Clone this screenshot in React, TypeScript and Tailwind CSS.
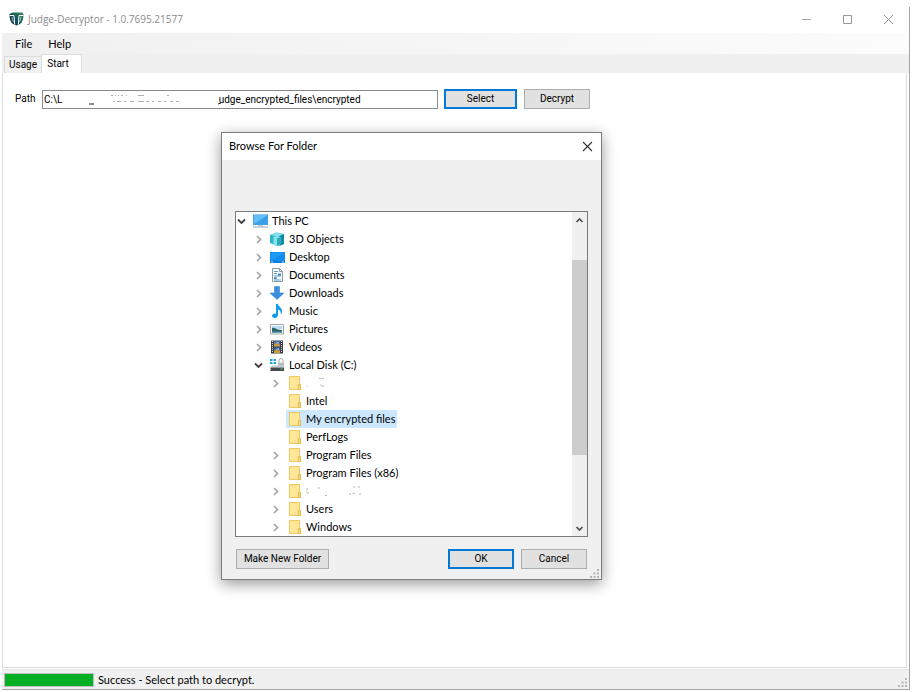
import { useState } from 'react';
import type { ReactNode } from 'react';

type IconName =
  | 'pc'
  | 'objects'
  | 'desktop'
  | 'documents'
  | 'downloads'
  | 'music'
  | 'pictures'
  | 'videos'
  | 'disk'
  | 'folder';

interface TreeNode {
  id: string;
  label: ReactNode;
  depth: 0 | 1 | 2;
  icon: IconName;
  state: 'open' | 'closed' | 'leaf';
}

const INDENT = { 0: 'pl-0', 1: 'pl-[17px]', 2: 'pl-[34px]' };

const NODES: TreeNode[] = [
  { id: 'pc', label: 'This PC', depth: 0, icon: 'pc', state: 'open' },
  { id: 'objects', label: '3D Objects', depth: 1, icon: 'objects', state: 'closed' },
  { id: 'desktop', label: 'Desktop', depth: 1, icon: 'desktop', state: 'closed' },
  { id: 'documents', label: 'Documents', depth: 1, icon: 'documents', state: 'closed' },
  { id: 'downloads', label: 'Downloads', depth: 1, icon: 'downloads', state: 'closed' },
  { id: 'music', label: 'Music', depth: 1, icon: 'music', state: 'closed' },
  { id: 'pictures', label: 'Pictures', depth: 1, icon: 'pictures', state: 'closed' },
  { id: 'videos', label: 'Videos', depth: 1, icon: 'videos', state: 'closed' },
  { id: 'disk', label: 'Local Disk (C:)', depth: 1, icon: 'disk', state: 'open' },
  { id: 'hidden-1', label: <ErasedShort />, depth: 2, icon: 'folder', state: 'closed' },
  { id: 'intel', label: 'Intel', depth: 2, icon: 'folder', state: 'leaf' },
  { id: 'encrypted', label: 'My encrypted files', depth: 2, icon: 'folder', state: 'leaf' },
  { id: 'perflogs', label: 'PerfLogs', depth: 2, icon: 'folder', state: 'leaf' },
  { id: 'program-files', label: 'Program Files', depth: 2, icon: 'folder', state: 'closed' },
  { id: 'program-files-x86', label: 'Program Files (x86)', depth: 2, icon: 'folder', state: 'closed' },
  { id: 'hidden-2', label: <ErasedLong />, depth: 2, icon: 'folder', state: 'closed' },
  { id: 'users', label: 'Users', depth: 2, icon: 'folder', state: 'closed' },
  { id: 'windows', label: 'Windows', depth: 2, icon: 'folder', state: 'closed' },
];

// The user name and download folder are wiped from the path, leaving a gap.
const INITIAL_PATH = 'C:\\L' + '\u00a0'.repeat(63) + 'udge_encrypted_files\\encrypted';

function ErasedShort() {
  return (
    <svg width="24" height="12" viewBox="0 0 24 12" className="block" aria-hidden="true">
      <path d="M0.5 9h1M13 1.5h2M16 1.5h2M15 9h3M14 8h1" stroke="#b9b4c4" />
    </svg>
  );
}

function ErasedLong() {
  return (
    <svg width="58" height="12" viewBox="0 0 58 12" className="block" aria-hidden="true">
      <path d="M1 3v2M1 8h2M13 2v2M19 10.500h2M43 9h2M47 2h2M52 2h2M47 8.500h2M53 9h2" stroke="#b5b5b5" />
      <path d="M0.500 4v4" stroke="#f5e3a0" />
    </svg>
  );
}

function Logo() {
  return (
    <svg width="16" height="16" viewBox="0 0 16 16" aria-hidden="true">
      <defs>
        <linearGradient id="logo" x1="1" y1="0" x2="0" y2="1">
          <stop offset="0" stopColor="#38965a" />
          <stop offset="0.5" stopColor="#14535c" />
          <stop offset="1" stopColor="#15244f" />
        </linearGradient>
      </defs>
      <path
        d="M1.500 3 4.500 1.500h10l1 2c.2 4-1 7.500-3.500 9.500L8.500 14.500 5 13C2.500 11 1.200 7.500 1.500 3z"
        fill="url(#logo)"
      />
      <path d="M1.500 4.500H6l.7 9M15.500 4.500H11l-.7 9" stroke="#fff" strokeWidth="1" fill="none" />
      <path d="M4 6c.2 2 .7 3.500 1.500 5M13 6c-.2 2-.7 3.500-1.500 5" stroke="#dcebec" strokeWidth="0.700" fill="none" />
    </svg>
  );
}

function NodeIcon({ name }: { name: IconName }) {
  return (
    <svg width="16" height="16" viewBox="0 0 16 16" className="shrink-0" aria-hidden="true">
      {name === 'pc' && (
        <>
          <rect x="1" y="1.500" width="15" height="10.500" fill="#2f8edb" />
          <path d="M1.500 2h14v9.500h-14z" fill="#64bdf7" />
          <path d="M1.500 11.500 15.500 2v9.500z" fill="#3a9fe9" />
          <path d="M6 12h5v1.500H6z" fill="#c4ccd3" />
          <path d="M1 14h15" stroke="#96a9b8" />
        </>
      )}
      {name === 'objects' && (
        <>
          <path d="M1 4 7 1.500 15 3v10l-7 2-7-3z" fill="#2eb5cb" />
          <path d="M1 4l7-2.500L15 3 8.500 5.500z" fill="#87e0e8" />
          <path d="M10.500 5 15 3v10l-4.500 2z" fill="#108aa4" />
          <path d="M4.500 6 8 5l3.500 1v7L8 15l-3.500-1.500z" fill="#8be3ea" />
          <path d="M8 7.500 11.500 6v7L8 15z" fill="#27a9bf" />
        </>
      )}
      {name === 'desktop' && (
        <>
          <path d="M1 3h15v11H1z" fill="#0f7fdc" />
          <path d="M1.500 3.500h14v8.500h-14z" fill="#1e9bf8" />
          <path d="M1.500 12 15.500 3.500V12z" fill="#118bee" />
          <path d="M2 13h2M13 13h2" stroke="#bde1ff" />
        </>
      )}
      {name === 'documents' && (
        <>
          <path d="M3.500 1.500h7l3 3v10h-10z" fill="#fafcfd" stroke="#8b989f" />
          <path d="M10.500 1.500v3h3" fill="none" stroke="#8b989f" />
          <path d="M5 4.500h4M5 6.500h3M9 7h3M5 9h7M5 11h3M5 13h7" stroke="#4fa3d4" />
          <path d="M9 7h3v1.500H9zM5 10.500h2.500v1.500H5z" fill="#377fae" />
        </>
      )}
      {name === 'downloads' && (
        <path d="M5.500 1.500h5V8H15l-7 6.500L1 8h4.500z" fill="#3a8ee0" stroke="#2b7acb" strokeWidth="0.500" />
      )}
      {name === 'music' && (
        <path
          d="M7 1h2c.3 2.500 4.500 3.500 4 8-.2 1.200-.7 1.800-1.500 2.500.7-2.500 0-4-2.500-5v5.500c0 1.800-1.500 3-3.200 3S3 14 3 12.800s1.300-2.300 3-2.300c.4 0 .7 0 1 .2z"
          fill="#109bef"
        />
      )}
      {name === 'pictures' && (
        <>
          <path d="M1.500 3.500h13v9.500h-13z" fill="#fff" stroke="#9da5ab" />
          <path d="M3 5h10v3H3z" fill="#b8dcf5" />
          <path d="M3 7c2-1 4 1 6 1.500l4 .5v2.500H3z" fill="#2d675f" />
          <path d="M3 10.500h10v1H3z" fill="#3b8bbf" />
        </>
      )}
      {name === 'videos' && (
        <>
          <path d="M2 1.500h12v13H2z" fill="#3c4044" />
          <path d="M5 2h6v5.500H5z" fill="#476ea8" />
          <path d="M5 8.500h6V14H5z" fill="#3a62a8" />
          <path d="M5 5l3-2 3 3v1.500H5zM5 12l3-2.500 3 2V14H5z" fill="#c49b43" />
          <path d="M8 3h2v2H8zM8 9h2v2H8z" fill="#74a3e0" />
          <path d="M3.500 2v12M12.500 2v12" stroke="#d6d9db" strokeDasharray="1 1" />
        </>
      )}
      {name === 'disk' && (
        <>
          <path d="M1 2h2.500v2H1zM4.500 2H7v2H4.500zM1 5h2.500v2H1zM4.500 5H7v2H4.500z" fill="#13a8e0" />
          <path d="M10 5.500V3.500a2 2 0 0 1 4 0v2" stroke="#a2aaaf" fill="none" />
          <path d="M9 5.500h6v4H9z" fill="#b8bec2" />
          <path d="M3 8.500h11l1 2H1.500z" fill="#c5cbcf" />
          <path d="M1.500 10.500h13.500v3.500H1.500z" fill="#43494d" />
          <path d="M11.500 12h2" stroke="#48df60" />
        </>
      )}
      {name === 'folder' && (
        <>
          <path d="M3.500 1.500h10v9h1v4h-11z" fill="#ffe797" stroke="#edc95f" />
          <path d="M12.500 9.500h2v5h-2z" fill="#ffe08a" stroke="#e3b949" />
        </>
      )}
    </svg>
  );
}

function Expander({ state }: { state: TreeNode['state'] }) {
  if (state === 'leaf') return <span className="w-4 shrink-0" />;
  return (
    <button
      type="button"
      className="flex h-4 w-4 shrink-0 items-center pl-[1px]"
      aria-label={state === 'open' ? 'Collapse' : 'Expand'}
    >
      <svg width="9" height="9" viewBox="0 0 9 9" fill="none" aria-hidden="true">
        {state === 'open' ? (
          <path d="M1 2.500 4.500 6 8 2.500" stroke="#404040" strokeWidth="1.800" />
        ) : (
          <path d="M3 1 6.500 4.500 3 8" stroke="#a6a6a6" strokeWidth="1.700" />
        )}
      </svg>
    </button>
  );
}

function Grip() {
  return (
    <svg width="9" height="9" viewBox="0 0 9 9" fill="#b4b4b4" aria-hidden="true">
      <path d="M7 0h2v2H7zM7 3.500h2v2H7zM7 7h2v2H7zM3.500 3.500h2v2h-2zM3.500 7h2v2h-2zM0 7h2v2H0z" />
    </svg>
  );
}

function PushButton({
  children,
  primary = false,
  className = '',
}: {
  children: ReactNode;
  primary?: boolean;
  className?: string;
}) {
  const border = primary ? 'border-2 border-[#0078d7]' : 'border border-[#adadad]';
  return (
    <button
      type="button"
      className={`flex items-center justify-center bg-[#e1e1e1] text-black ${border} ${className}`}
    >
      {children}
    </button>
  );
}

function FolderTree() {
  const [selected, setSelected] = useState('encrypted');

  return (
    <div className="flex border border-[#7a7a7a] bg-white">
      <ul role="tree" aria-label="Folders" className="min-w-0 flex-1">
        {NODES.map((node) => (
          <li
            key={node.id}
            role="treeitem"
            aria-selected={selected === node.id}
            onClick={() => setSelected(node.id)}
            className={`flex h-[18px] items-center ${INDENT[node.depth]}`}
          >
            <Expander state={node.state} />
            <span
              className={`flex h-[18px] items-center gap-1 whitespace-nowrap pr-[2px] ${
                selected === node.id ? 'bg-[#cce8ff]' : ''
              }`}
            >
              <NodeIcon name={node.icon} />
              {node.label}
            </span>
          </li>
        ))}
      </ul>
      <div className="flex w-[15px] shrink-0 flex-col bg-[#f0f0f0]">
        <button type="button" aria-label="Scroll up" className="flex h-4 items-center justify-center">
          <svg width="9" height="7" viewBox="0 0 9 7" fill="none" aria-hidden="true">
            <path d="M1.500 5 4.500 2l3 3" stroke="#505050" strokeWidth="1.700" />
          </svg>
        </button>
        <div className="h-8" />
        <div className="h-[195px] bg-[#cdcdcd]" />
        <div className="flex-1" />
        <button type="button" aria-label="Scroll down" className="flex h-4 items-center justify-center">
          <svg width="9" height="7" viewBox="0 0 9 7" fill="none" aria-hidden="true">
            <path d="M1.500 2l3 3 3-3" stroke="#505050" strokeWidth="1.700" />
          </svg>
        </button>
      </div>
    </div>
  );
}

function BrowseDialog() {
  return (
    <div
      role="dialog"
      aria-labelledby="browse-title"
      className="absolute left-[221px] top-[132px] w-[381px] border border-[#7c7c7c] bg-[#f0f0f0] shadow-[0_4px_14px_rgba(0,0,0,0.4)]"
    >
      <div className="flex h-[27px] items-center justify-between bg-white pb-[1px] pl-[7px] pr-2">
        <h2 id="browse-title">Browse For Folder</h2>
        <button type="button" aria-label="Close">
          <svg width="11" height="11" viewBox="0 0 11 11" aria-hidden="true">
            <path d="M1 1l9 9M10 1l-9 9" stroke="#333" strokeWidth="1.100" />
          </svg>
        </button>
      </div>
      <div className="px-[13px] pt-[51px]">
        <FolderTree />
        <div className="mt-3 flex h-5 gap-[7px] px-[1px] font-[Roboto,Arial,sans-serif] text-[10px]">
          <PushButton className="mr-auto w-[93px]">Make New Folder</PushButton>
          <PushButton primary className="w-[66px]">
            OK
          </PushButton>
          <PushButton className="w-[66px]">Cancel</PushButton>
        </div>
      </div>
      <div className="flex h-[10px] items-end justify-end pr-[2px] pb-[1px]">
        <Grip />
      </div>
    </div>
  );
}

export default function App() {
  const [path, setPath] = useState(INITIAL_PATH);

  return (
    <div className="relative flex min-h-screen flex-col bg-white pb-[2px] pl-[2px] pr-[6px] pt-[7px] font-[Lato,'Open_Sans',sans-serif] text-[11px] leading-4 text-black">
      <div className="flex flex-1 flex-col border-b border-r border-[#a5a5a5]">
        <header className="flex h-[26px] items-center pb-[2px] pl-[6px] pr-[15px]">
          <Logo />
          <h1 className="ml-1 font-['Open_Sans',sans-serif] text-[10px] text-[#8c8c8c]">
            Judge-Decryptor - 1.0.7695.21577
          </h1>
          <div className="ml-auto flex items-center gap-[30px]">
            <button type="button" aria-label="Minimize">
              <svg width="11" height="11" viewBox="0 0 11 11" aria-hidden="true">
                <path d="M1 5.500h9" stroke="#a5a5a5" />
              </svg>
            </button>
            <button type="button" aria-label="Maximize">
              <svg width="11" height="11" viewBox="0 0 11 11" aria-hidden="true">
                <path d="M1.500 1.500h8v8h-8z" stroke="#999" fill="none" />
              </svg>
            </button>
            <button type="button" aria-label="Close">
              <svg width="11" height="11" viewBox="0 0 11 11" aria-hidden="true">
                <path d="M1 1l9 9M10 1l-9 9" stroke="#999" />
              </svg>
            </button>
          </div>
        </header>

        <nav className="flex h-[21px] items-center gap-4 bg-linear-to-r from-[#f0f0f0] to-[#fcfcfc] pl-[13px]">
          <button type="button">File</button>
          <button type="button">Help</button>
        </nav>

        <div
          role="tablist"
          className="flex h-[19px] items-end bg-[#f0f0f0] pl-[2px] font-[Roboto,Arial,sans-serif] text-[10px]"
        >
          <button
            type="button"
            role="tab"
            aria-selected="false"
            className="h-[17px] w-[37px] border-l border-t border-[#dcdcdc] text-center"
          >
            Usage
          </button>
          <button
            type="button"
            role="tab"
            aria-selected="true"
            className="h-[19px] w-[41px] border-x border-t border-[#dcdcdc] bg-white pr-[7px] text-center"
          >
            Start
          </button>
        </div>

        <main className="mr-[2px] flex-1 border-x border-b border-[#dcdcdc] pt-4 font-[Roboto,Arial,sans-serif] text-[10px]">
          <div className="flex items-center pl-3">
            <label htmlFor="path" className="w-[27px]">
              Path
            </label>
            <div className="relative w-[396px]">
              <input
                id="path"
                type="text"
                value={path}
                onChange={(e) => setPath(e.target.value)}
                className="block h-[19px] w-full border border-[#8a8a8a] bg-white px-[1px] outline-none"
              />
              <svg
                width="182"
                height="11"
                viewBox="0 0 182 11"
                className="pointer-events-none absolute left-0 top-1"
                aria-hidden="true"
              >
                <path d="M47 10h5M176 10l3-1" stroke="#222" fill="none" />
                <path
                  d="M69 1.500h2M73 1.500h1M76 1.500h1M79 1.500h2M84 1.500h1M96 1.500h6M125 1.500h2M71 7.500h2M75 7.500h4M82 7.500h2M88 7.500h4M96 7.500h6M104 7.500h3M110 7.500h2M116 7.500h3M122 7.500h2M128 7.500h3M134 7.500h3"
                  stroke="#b0b0b0"
                />
              </svg>
            </div>
            <PushButton primary className="ml-[6px] h-5 w-[73px]">
              Select
            </PushButton>
            <PushButton className="ml-[7px] h-5 w-[66px]">Decrypt</PushButton>
          </div>
        </main>

        <footer className="mt-[1px] flex h-5 items-center border-t border-[#e4e4e4] bg-[#f0f0f0] pl-[2px]">
          <div
            role="progressbar"
            aria-label="Decryption"
            aria-valuenow={100}
            className="h-[14px] w-[90px] border border-[#bcbcbc] bg-[#06b025]"
          />
          <p className="ml-1">Success - Select path to decrypt.</p>
          <div className="ml-auto self-end pb-[2px] pr-[2px]">
            <Grip />
          </div>
        </footer>
      </div>
      <BrowseDialog />
    </div>
  );
}
